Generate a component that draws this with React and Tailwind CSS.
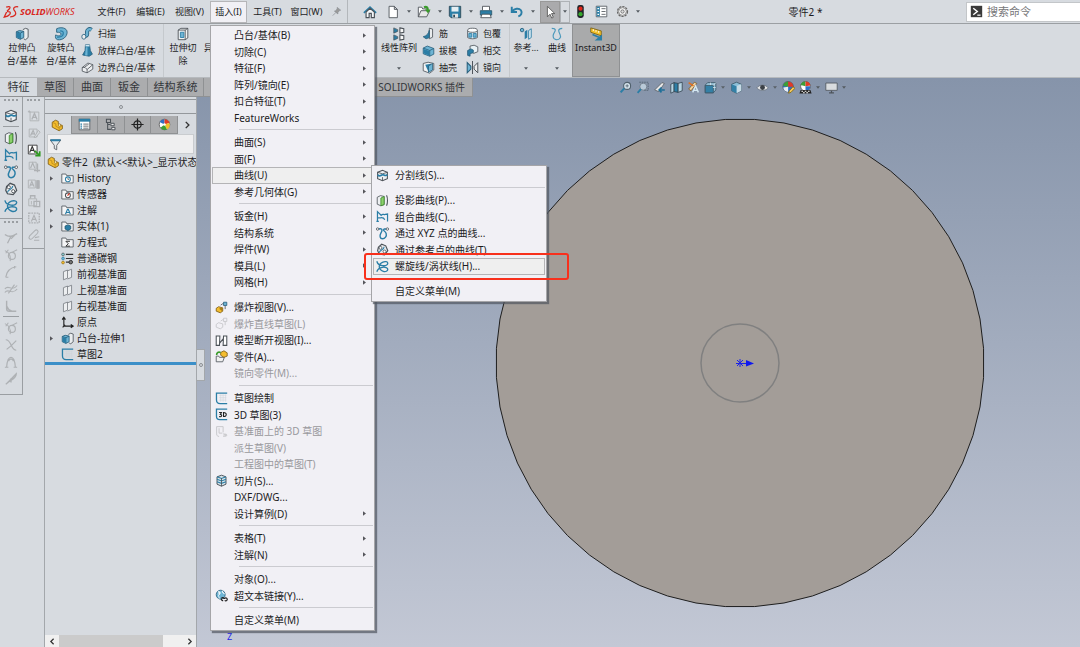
import React, { useState } from 'react'

const K = '#4b5157'
const B = '#2b7ea6'
const L = '#6db4d4'

// 16x16 drawings, looked up by name
const icons = {
    home: <><path d="M1 9L8 2.500l7 6.500" fill="none" stroke={B} strokeWidth="2" /><path d="M3.500 8v6.500H7V9.500h2.500v5H13V8L8 3.800z" fill="#f4f6f8" stroke={K} strokeWidth="1.300" /></>,
    page: <path d="M3.500 1.500h6l3.500 3.500v9.500h-9.500zM9.500 1.500V5H13" fill="#fff" stroke={K} />,
    open: <><path d="M1.500 13.500v-11h4l1 2h5v2" fill="#fff" stroke={K} /><path d="M1.500 13.500l3-7h10l-3.500 7z" fill="#e8e8e8" stroke={K} /><path d="M8 2.500c3-1 4 0 4.500 3" fill="none" stroke="#3a9c2b" strokeWidth="2.500" /><path d="M9 5h6.500l-3 4.500z" fill="#3a9c2b" /></>,
    save: <><path d="M1.500 1.500h13v13h-11l-2-2z" fill={B} stroke="#2d4856" /><path d="M4 2h8v5.500H4z" fill="#e4eef3" /><path d="M5 10h6.500v4.500H5z" fill="#dfe3e6" /><path d="M6 11h2v3H6z" fill="#2d4856" /></>,
    print: <><path d="M4 6V1.500h8V6" fill="#fff" stroke={K} /><path d="M1.500 6.500h13v5h-13z" fill={B} stroke="#2d5a70" /><path d="M3.500 10.500h9l1.500 4h-12z" fill="#fff" stroke={K} /></>,
    undo: <path d="M2 2v6h6M2.500 7.500C5 4 10 3 12.500 6c2 3 0 6-3 7" fill="none" stroke={B} strokeWidth="2.200" />,
    cursor: <path d="M5 1.500v12l3-3 2 4.500 1.800-1-2-4.200H13.500z" fill="#fff" stroke="#555" />,
    traffic: <><rect x="4" y="0" width="8" height="16" rx="3" fill="#20252a" /><circle cx="8" cy="4.500" r="2.600" fill="#e0281c" /><circle cx="8" cy="11.300" r="2.600" fill="#35a92c" /></>,
    list: <><path d="M1.500 1.500h13v13h-13z" fill="#fff" stroke={K} /><path d="M2 2h4v12H2z" fill={B} /><path d="M3 4.500h2M3 8h2M3 11.500h2" stroke="#fff" strokeWidth="1.500" /><path d="M8 4.500h5M8 8h5M8 11.500h5" stroke={K} /></>,
    props: <><path d="M1.500 1.500h13v13h-13z" fill="#fff" stroke={K} /><path d="M1 1h14v3.500H1z" fill={B} /><path d="M3 7.500h2M3 10h2M3 12.500h2" stroke={B} strokeWidth="1.500" /><path d="M6.500 7.500H13M6.500 10H13M6.500 12.500H13" stroke={K} /></>,
    gear: <><circle cx="8" cy="8" r="6" fill="#eee" stroke="#666" strokeWidth="1.800" strokeDasharray="2.700 1.200" /><circle cx="8" cy="8" r="4.800" fill="#f3f3f3" stroke="#777" /><circle cx="8" cy="8" r="2" fill="#ddd" stroke="#666" /></>,
    pin: <path d="M9 2l5 4-1.500.5-2.500 3v2L5 7.500l2-.5 2-3zM7 9.500L2.500 14" fill="#999" stroke="#8b8f93" />,
    prompt: <><path d="M1 1h14v14H1z" fill="#3a3a3a" /><path d="M4 4l5 4-5 4" fill="none" stroke="#fff" strokeWidth="1.800" /><path d="M9 12.500h4" stroke="#fff" strokeWidth="1.500" /></>,
    extrude: <><path d="M9 3l3-1.500 3 1V12l-3 2.500-2-1" fill="#e9ecee" stroke={K} /><path d="M1.500 5.500L5 4l5 1v7l-4 2-4.500-2z" fill={L} stroke="#285f7c" /><path d="M1.500 5.500L6 7l4-2M6 7v7" fill="none" stroke="#285f7c" /><path d="M2 6l4 1.500V13.500L2 11.700z" fill={B} /></>,
    revolve: <><path d="M3 2c5-2.500 12-1 12 4s-5 9.500-11 8.500c-2-.5-3-3-2-5.500 3 2 6 1 6-1S6 6 3 6z" fill={L} stroke="#285f7c" /><path d="M7 4.500c3 0 4 1 3.500 3.500S7 12 3.500 11.500" fill="none" stroke={B} strokeWidth="1.500" /></>,
    sweep: <><path d="M13 3.500c-3-2-6 0-5.500 3.500S7 11 3 11.500" fill="none" stroke="#285f7c" strokeWidth="5" /><path d="M13 3.500c-3-2-6 0-5.500 3.500S7 11 3 11.500" fill="none" stroke={L} strokeWidth="3" /><ellipse cx="3.500" cy="12" rx="2.500" ry="3" fill="#eee" stroke="#285f7c" /></>,
    loft: <><path d="M5.500 1h5l1 7 2.500 4.500-4 2.500L2 13.500 5 8z" fill={B} stroke="#285f7c" /><path d="M5.500 1h5v2h-5z" fill="#cfe6f0" /><path d="M6 4h2v10H5z" fill={L} /></>,
    boundary: <><path d="M1.500 8l7-5.500 6 2V10l-7 4.500-6-2z" fill="#eceef0" stroke={K} /><path d="M1.500 8c4-1 4 1 6 2.500l7-6M7.500 10.500v4M4 8l6-4.500" fill="none" stroke={K} /></>,
    cut: <><path d="M2.500 3.500l3-2h8v11l-3 2h-8z" fill="#f1f2f3" stroke={K} /><path d="M2.500 3.500h8v11M10.500 3.500l3-2" fill="none" stroke={K} /><path d="M5 6h4v6H5z" fill={L} stroke={B} /></>,
    pattern: <><path d="M2 1v6l4.500-2V3zM2 9v6l4.500-2v-2z" fill={B} stroke={K} strokeWidth=".8" /><path d="M9 1l4.500 1v4L9 7zM9 9l4.500 1v4L9 15z" fill="#f7f7f7" stroke={K} strokeWidth="1.200" /></>,
    rib: <><path d="M9 1.500l4 1v10l-4 2z" fill="#e9ecee" stroke={K} /><path d="M1.500 12C6 11 8 8 9 4v9l-4 1.500z" fill={B} stroke="#285f7c" /></>,
    draft: <><path d="M1.500 5l5-2.500 8 3v7l-5 2.500-8-3z" fill={L} stroke="#285f7c" /><path d="M1.500 5l8 3 5-2.500M9.500 8v7" fill="none" stroke="#285f7c" /><path d="M2 6l7 2.500V14l-7-2.500z" fill={B} /></>,
    shell: <><path d="M1.500 3l6-1.500 7 1.500v8l-5 4-8-3z" fill="#f2f3f4" stroke={K} /><path d="M4 4.500l7-1V11l-3 2.500z" fill={B} /><path d="M8 6l5-3v8l-5 3z" fill={L} stroke="#285f7c" /></>,
    wrap: <><path d="M2 4v9c2 2 10 2 12 0V4" fill="#dfeaf0" stroke={K} /><ellipse cx="8" cy="4" rx="6" ry="2.500" fill="#fff" stroke={K} /><path d="M3.500 8h3.500v4.500H3.500zM9 8h3.500v4.500H9z" fill={L} stroke={B} /></>,
    intersect: <><path d="M5 2.500l5-1 4.500 2v6l-5 2L5 9z" fill="#e8f1f5" stroke={K} /><path d="M2 14V8l4-2 3 1.500v3L5 12v3z" fill={B} stroke="#285f7c" /></>,
    mirror: <><path d="M1.500 2v12.500L6 10V6.500z" fill={L} stroke="#285f7c" strokeWidth="1.300" /><path d="M8 0v16" stroke={K} strokeWidth="1.200" /><path d="M14.500 2v12.500L10 10V6.500z" fill="#eee" stroke={K} strokeWidth="1.200" /></>,
    refgeo: <><circle cx="3.500" cy="3.500" r="2" fill={L} stroke="#285f7c" /><path d="M6.500 5l3-2v9l-3 2z" fill={B} /><path d="M11 4l3-2v10l-3 2z" fill="#dcebf2" stroke={B} /></>,
    curve: <path d="M2 1.500c6 0 4 3 2.500 5.500S3 14 7 14.500s6-3 4.500-6S8 2 14 1.500" fill="none" stroke="#4a98bb" strokeWidth="1.300" />,
    instant: <><path d="M2 1L14 4.500V10L2 6z" fill="#f4c22c" stroke="#7d6414" /><path d="M5 2.500v2M8 3.500v2M11 4.500v2" stroke="#fff" /><path d="M4 8.500l8 3.500M14 10.500v4H9z" fill={B} stroke={B} strokeWidth="1.800" /></>,
    split: <><path d="M2 4l6-2.500L14 4v8l-6 2.500L2 12z" fill="#eef0f2" stroke={K} strokeWidth="1.300" /><path d="M2 4l6 2 6-2M8 10v4" fill="none" stroke={K} /><path d="M2 7c3 4 5-1 7 0s3 2 5 0" fill="none" stroke={B} strokeWidth="2" /></>,
    project: <><path d="M1.500 4l4-2 4.500 1v10l-4 1.500-4.500-2z" fill="#eef0f2" stroke={K} /><path d="M6 5l4-2v10l-4 1.500z" fill="#8bd06b" stroke="#3c8b2a" /><path d="M13 1.500c1.500 3 1.500 10 0 13" fill="none" stroke={K} strokeWidth="1.300" /></>,
    composite: <path d="M.5 14h3M1.800 14V2l4.500 4.500c2-2.500 3-.5 5-1L14.200 5v9M1.800 9.500c4 1 7-2 9 2.500" fill="none" stroke={B} strokeWidth="1.500" />,
    xyz: <><path d="M3 2.500c6-1.500 4.500 2.500 3 5-2 3.500-1 7 2 7s5.500-3 4.500-6.500-5-3.500-2.500-5.500h3" fill="none" stroke={B} strokeWidth="1.700" /><circle cx="2" cy="2.500" r="1.500" fill="#fff" stroke={K} /><circle cx="14" cy="2.500" r="1.500" fill="#fff" stroke={K} /></>,
    refpts: <><path d="M3 5l4-3.500 5 2 2.500 6-4 5-6.500-1-2-4z" fill="#e7e9eb" stroke={K} strokeWidth="1.400" /><circle cx="5.500" cy="6" r="1.800" fill="#fff" stroke={K} /><circle cx="10.500" cy="10.500" r="1.800" fill="#fff" stroke={K} /><path d="M4 12c0-4 6-3 6-7.500" fill="none" stroke={B} strokeWidth="1.300" /></>,
    helix: <path d="M1 1.500c1 4 3 5 7 5.500s6.500-1 6.500-3S11 1.500 8.500 2.500 4 6 4 8s2 5 5 6 5.500-.5 5.500-2.500-3-3-6.500-2.500-6 2-7 5.500" fill="none" stroke={B} strokeWidth="1.600" />,
    anno: <><path d="M3.500 3.500h10v10h-10z" fill="none" stroke="currentColor" /><path d="M5.500 12l3-7 3 7M6.500 9.500h4" fill="none" stroke="currentColor" strokeWidth="1.500" /><path d="M1 3h3M2.500 1.500v3" stroke="currentColor" /></>,
    annoGo: <><path d="M1.500 2.500h10v10h-10z" fill="#fff" stroke="#333" /><path d="M3 11l3-7 3 7M4 8.500h4" fill="none" stroke="#333" strokeWidth="1.300" /><path d="M9 9l5 5M14.500 9.500v5h-5" fill="none" stroke="#2f9a20" strokeWidth="2" /></>,
    annoEdit: <><path d="M2.500 3.500h9v9h-9z" fill="none" stroke="currentColor" /><path d="M4 11l3-6 2 5M5 9h3" fill="none" stroke="currentColor" strokeWidth="1.300" /><path d="M8 13l5-8 2 2-5 6z" fill="#d7dbe0" stroke="currentColor" /></>,
    annoMove: <><path d="M2.500 2.500h8v8h-8z" fill="none" stroke="currentColor" /><path d="M4 9.500l2.500-6 2.500 6" fill="none" stroke="currentColor" strokeWidth="1.300" /><path d="M12 4v10M8 12h7" stroke="currentColor" strokeWidth="1.500" /></>,
    annoLock: <><path d="M1.500 3.500h8v9h-8z" fill="none" stroke="currentColor" /><path d="M3 11l2.500-6L8 11M4 9h3" fill="none" stroke="currentColor" strokeWidth="1.300" /><path d="M11 4h3v9h-3z" fill="currentColor" stroke="currentColor" /></>,
    lock: <><path d="M2 5.500h9v8H2z" fill="none" stroke="currentColor" /><path d="M4 5V2h5v3M8 8.500h6.500v6H8z" fill="none" stroke="currentColor" strokeWidth="1.500" /><path d="M5 8v4" stroke="currentColor" /></>,
    annoArea: <><path d="M2 2.500h12v11H2z" fill="none" stroke="currentColor" strokeWidth="1.500" strokeDasharray="2 1" /><path d="M5 12l3-7 3 7M6 9.500h4" fill="none" stroke="currentColor" strokeWidth="1.300" /></>,
    clip: <path d="M3 9l6-6c2-2 5 0 3 3l-6 6c-2 2-5 0-3-3l5-5M9 11l5-1M8 14h6" fill="none" stroke="currentColor" strokeWidth="1.200" />,
    s1: <path d="M1 4c4 3 7 3 14-1M8 6L4 14M6 6h5l-3 3" fill="none" stroke="currentColor" strokeWidth="1.500" />,
    s2: <><circle cx="9" cy="9" r="4" fill="none" stroke="currentColor" strokeWidth="1.300" /><path d="M1 3c5 2 7 6 6 12M2 6l3-4M9 5l6-3" fill="none" stroke="currentColor" strokeWidth="1.200" /></>,
    s3: <path d="M2 14C3 7 7 3 14 2M2 14h3M12 1v3" fill="none" stroke="currentColor" strokeWidth="1.300" />,
    s4: <path d="M1 8c4-6 8 4 14-4M1 12c4-6 8 4 14-4M5 13l7-10" fill="none" stroke="currentColor" strokeWidth="1.300" />,
    s5: <path d="M3 2v9c0 2 1 3 3 3h8M3 8c1 3 3 5 6 6" fill="none" stroke="currentColor" strokeWidth="1.600" />,
    s6: <path d="M2 2c4 0 5 4 6 6s3 6 6 6M14 3L8 9M3 13l5-4" fill="none" stroke="currentColor" strokeWidth="1.400" />,
    s7: <path d="M3 14C4-1 12-1 13 14M5.500 7c0-3 5-3 5 0M1 14h4M11 14h4" fill="none" stroke="currentColor" strokeWidth="1.300" />,
    s8: <path d="M2 14C5 12 8 8 14 2c0 5-4 6-8 9M8 7v5" fill="none" stroke="currentColor" strokeWidth="1.500" />,
    part: <><path d="M1.500 4l4-2.500L9 3v3l5 2v4l-4 2.500L1.500 10z" fill="#f4bd2e" stroke="#7b5a12" /><path d="M1.500 4L6 6v3l4 2 4-3M10 11v3" fill="none" stroke="#b8891c" /><circle cx="10.500" cy="7.500" r="1.500" fill="#fff3c4" stroke="#7b5a12" strokeWidth=".7" /></>,
    config: <><path d="M3 1.500h5v4H3zM4.500 5.500v8.500h4M4.500 8h3" fill="none" stroke={K} strokeWidth="1.300" /><path d="M8.500 6.500h4v3h-4zM9.500 11.500h4v3h-4z" fill="#eee" stroke={K} strokeWidth="1.200" /></>,
    target: <><circle cx="8" cy="8" r="4.500" fill="none" stroke="#222" strokeWidth="1.500" /><path d="M8 .5v15M.5 8h15" stroke="#222" strokeWidth="1.500" /></>,
    ball: <><circle cx="8" cy="8" r="6.500" fill="#fff" stroke="#555" /><path d="M8 8L2 5a6.500 6.500 0 016-3.500z" fill="#2f6fc4" /><path d="M8 8V1.500A6.500 6.500 0 0114 6z" fill="#e03b26" /><path d="M8 8l6-2a6.500 6.500 0 01-3 8z" fill="#f1c22b" /><path d="M8 8l3 6a6.500 6.500 0 01-8-2z" fill="#3d9e36" /><circle cx="8" cy="8" r="1.500" fill="#fff" /></>,
    ballEdit: <><circle cx="7.500" cy="7" r="6.500" fill="#2f6fc4" stroke="#555" strokeWidth=".8" /><path d="M7.500 7L1.500 6a6.500 6.500 0 016-5.500z" fill="#3d9e36" /><path d="M7.500 7V.5A6.500 6.500 0 0114 7z" fill="#e03b26" /><path d="M1.500 8l6-1v6.500A6.500 6.500 0 011.500 8z" fill="#e8edf2" /><path d="M8 15l1-3 4.500-5L16 9l-5 5z" fill="#f4c95c" stroke="#7d6414" /></>,
    ballScene: <><circle cx="8" cy="6.500" r="6" fill="#fff" stroke="#555" /><path d="M8 6.500L2 5a6 6 0 016-4.500z" fill="#3d9e36" /><path d="M8 6.500V.5a6 6 0 016 5z" fill="#e03b26" /><path d="M8 6.500h6a6 6 0 01-6 6z" fill="#2f6fc4" /><path d="M2 11h12l1.500 4.500H.5z" fill="#222" /><path d="M3 12.500h2M7 12.500h2M11 12.500h2M5 14.500h2M9 14.500h2" stroke="#fff" strokeWidth="1.300" /></>,
    funnel: <><path d="M1.500 2.500h13L9.500 9v5.500l-3-1.500V9z" fill="#e6eaed" stroke={K} /><path d="M1.500 1.500h13l-1 2.500h-11z" fill={B} /></>,
    fHistory: <><path d="M1 13.500v-11h5l1 2h8v9z" fill="#f4f5f6" stroke={K} /><circle cx="8.500" cy="9" r="3" fill="#fff" stroke={B} strokeWidth="1.300" /><path d="M8.500 7.500V9H10" fill="none" stroke={K} /></>,
    fSensor: <><path d="M1 13.500v-11h5l1 2h8v9z" fill="#f4f5f6" stroke={K} /><circle cx="8.500" cy="9" r="3" fill="#fff" stroke={K} strokeWidth="1.300" /><path d="M8 9.500l2.500-3" stroke="#d93a26" strokeWidth="1.500" /></>,
    fAnno: <><path d="M1 13.500v-11h5l1 2h8v9z" fill="#f4f5f6" stroke={K} /><path d="M5.500 12.500l2.500-6h1l2.500 6M6.500 10.500h4" fill="none" stroke={B} strokeWidth="1.400" /></>,
    fBody: <><path d="M1 13.500v-11h5l1 2h8v9z" fill="#f4f5f6" stroke={K} /><path d="M5 7.500l3.500-1.500L12 7.500V11l-3.500 2L5 11z" fill={B} stroke="#1f566f" /></>,
    fEq: <><path d="M1 13.500v-11h5l1 2h8v9z" fill="#f4f5f6" stroke={K} /><path d="M11 6.500H6l3 3-3 3h5" fill="none" stroke="#333" strokeWidth="1.200" /></>,
    material: <><path d="M6 3h9M6 8h9M6 12.500h4" stroke="#333" strokeWidth="1.400" /><circle cx="2.500" cy="3" r="1.700" fill="#8cc" stroke={K} strokeWidth=".8" /><circle cx="2.500" cy="8" r="1.700" fill={L} stroke={B} strokeWidth=".8" /><circle cx="2.500" cy="13" r="1.700" fill="#f4bd2e" stroke="#8d6a12" strokeWidth=".8" /><circle cx="12" cy="12.500" r="2.200" fill="#777" stroke="#222" /></>,
    plane: <path d="M3 4.500l5-2v10l-5 2zM8 3.500l5-2v10l-5 2" fill="#eceef0" stroke="#777d83" />,
    origin: <path d="M3.500 2v10.500H14M1.500 4.500l2-3 2 3M12 10.500l3 2-3 2M2 14l3-3" fill="none" stroke="#222" strokeWidth="1.400" />,
    sketch: <><path d="M5 4h9M5 7h9M5 10h9M7 3v9M10 3v9M13 3v9" stroke="#cfd4d9" strokeWidth=".7" /><path d="M15 1.500H1.800V9.500c0 3 1.500 4.700 4.500 4.700H15" fill="none" stroke={B} strokeWidth="1.600" /></>,
    explode: <><path d="M1.500 9l3-2 5 1.500v4l-3 2-5-2z" fill="#f4bd2e" stroke="#7b5a12" /><path d="M5 9.500l4-2v5z" fill="#a77b14" /><path d="M10.500 1.500h4v4h-4z" fill={L} stroke="#285f7c" /><path d="M7 5l3-2M12.500 6v4" stroke={K} /></>,
    explodeOff: <><path d="M1.500 9l3-2 5 1.500v4l-3 2-5-2z" fill="none" stroke="#c4c4c8" /><path d="M10.500 1.500h4v4h-4zM7 5l3-2M12.500 6v4" fill="none" stroke="#c4c4c8" /></>,
    breakView: <path d="M1.500 2.500H6L5.500 14h-4zM10.500 2.500h4V14H10zM6 11l4-5" fill="#fff" stroke={K} strokeWidth="1.300" />,
    insertPart: <><path d="M1.500 14.500v-7h3l1 1.500h6l-2 5.500z" fill="#f1f1f1" stroke={K} /><path d="M7 3l4-2 4 2.500v4L11 9 7 6.500z" fill="#f4bd2e" stroke="#7b5a12" /><path d="M2 6c0-3 2-4 5-3" fill="none" stroke="#3a9c2b" strokeWidth="2" /></>,
    sketch3d: <><path d="M15 1.500H1.800V10c0 2.500 1.500 4.200 4 4.200H15" fill="none" stroke={B} strokeWidth="1.600" /><path d="M5 5.500h3L6.500 8c3 0 2 3.500-1.500 2.500M10.500 5.500v5c4.500 0 4.500-5 0-5z" fill="none" stroke="#222" strokeWidth="1.300" /></>,
    sketchOff: <path d="M2 2v9c0 2 1 3 3 3M2 2h8v7M5 4v6h4M10 11h2l-1 1.500 1 1.500h-2M13 11v3c2 0 2-3 0-3z" fill="none" stroke="#c8c8cc" strokeWidth="1.200" />,
    slice: <><path d="M2.500 3.500L8 1.500l5.500 2v9L8 15l-5.500-2.500z" fill="#d9e6ec" stroke={K} strokeWidth="1.200" /><path d="M2.500 6.500l5.500 2 5.500-2M2.500 9.500l5.500 2 5.500-2M2.500 3.500l5.500 2 5.500-2" fill="none" stroke={B} strokeWidth="1.300" /><path d="M8 5v10" stroke={K} /></>,
    link: <><circle cx="7" cy="7" r="5.500" fill={L} stroke="#285f7c" /><path d="M4 3c3 0 3 3 1 4s1 3 0 5M9 2c0 3 1 3 3 4" fill="#e8f2f6" stroke="#fff" /><path d="M8 11.500a1.800 1.800 0 013 0h1a1.800 1.800 0 110 2.500M8 12a1.500 1.500 0 002 2" fill="none" stroke="#222" strokeWidth="1.500" /></>,
    zoomFit: <><circle cx="10" cy="6" r="4.300" fill="#d5e3ec" stroke="#50606c" strokeWidth="1.300" /><path d="M6.500 9L2 14" stroke={B} strokeWidth="2.500" /><path d="M8 6h4M10 4v4" stroke="#50606c" /></>,
    zoomArea: <><path d="M4 1.500h11v10H9" fill="none" stroke="#50606c" strokeDasharray="2 1" /><circle cx="9" cy="7" r="4.300" fill="#b9cad8" stroke="#6c7985" /><path d="M6 10l-4 4.500" stroke={B} strokeWidth="2.300" /></>,
    prevView: <><path d="M2 11l9-9 3 1-7 10z" fill="#e6e6e6" stroke="#5b6066" /><path d="M14.500 11H8M10.500 8L7.500 11l3 3" fill="none" stroke="#1f6f98" strokeWidth="2" /></>,
    section: <><path d="M1 4l4-2v11l-4 2z" fill="#b8d5e3" stroke="#34444f" /><path d="M5 2l5 1v11l-5-1z" fill={B} stroke="#34444f" /><path d="M10 3l5-1.500V12l-5 2z" fill="#b8d5e3" stroke="#34444f" /></>,
    drawType: <><path d="M2 10L9 1.500 12 3 5 12z" fill="#f1d3a0" stroke="#7a5a2c" /><path d="M7 14l3.500-8 3.500 8M8 11.500h5" fill="none" stroke="#d4e8f2" strokeWidth="1.700" /><path d="M2 2l6 4" stroke="#e0701f" strokeWidth="2" /></>,
    orient: <><path d="M1.500 5l3-3h10v9l-3 3.500h-10z" fill="#9cc7dc" stroke="#34505f" /><path d="M1.500 5.500h10v9h-10z" fill={B} stroke="#34505f" /><path d="M8 2v3M11.500 5.500l3-3.500M11 8h3.500" stroke="#e4eef3" /></>,
    display: <><path d="M2 4l6-2.500L14 4v8l-6 3-6-3z" fill="#8dc3dc" stroke="#34505f" /><path d="M8 6l6-2v8l-6 3z" fill="#cfe3ed" /><path d="M2 4l6 2.500V15l-6-3z" fill={B} /></>,
    eye: <><path d="M1 8.500C4 4 12 4 15 8.500c-3 4-11 4-14 0z" fill="#eee" stroke="#68717a" /><circle cx="8" cy="8" r="3" fill="#33383d" /></>,
    monitor: <><path d="M1 2.500h14v9H1z" fill="#d9dcdf" stroke="#4d545b" /><path d="M8 12v2.500M5 14.500h6" stroke="#4d545b" strokeWidth="1.500" /></>,
    arrowL: <path d="M10 3L5 8l5 5" fill="none" stroke="#333" strokeWidth="2.200" />,
    arrowR: <path d="M6 3l5 5-5 5" fill="none" stroke="#333" strokeWidth="2.200" />,
}

const Icon = ({ name, className = 'size-3' }) => (
    <svg viewBox="0 0 16 16" className={`shrink-0 ${className}`} aria-hidden="true">{icons[name]}</svg>
)

const Caret = () => (
    <svg viewBox="0 0 6 4" className="w-1 h-[3px] shrink-0" aria-hidden="true"><path d="M0 0h6L3 4z" fill="#555b61" /></svg>
)

const Chevron = () => (
    <svg viewBox="0 0 4 6" className="w-[3px] h-[5px] shrink-0" aria-hidden="true"><path d="M0 0l4 3-4 3z" fill="#55555a" /></svg>
)

// sub: has a submenu, off: greyed out
const insertMenu = [
    [
        { label: '凸台/基体(B)', sub: true },
        { label: '切除(C)', sub: true },
        { label: '特征(F)', sub: true },
        { label: '阵列/镜向(E)', sub: true },
        { label: '扣合特征(T)', sub: true },
        { label: 'FeatureWorks', sub: true },
    ],
    [
        { label: '曲面(S)', sub: true },
        { label: '面(F)', sub: true },
        { label: '曲线(U)', sub: true, open: true },
        { label: '参考几何体(G)', sub: true },
    ],
    [
        { label: '钣金(H)', sub: true },
        { label: '结构系统', sub: true },
        { label: '焊件(W)', sub: true },
        { label: '模具(L)', sub: true },
        { label: '网格(H)', sub: true },
    ],
    [
        { label: '爆炸视图(V)...', icon: 'explode' },
        { label: '爆炸直线草图(L)', icon: 'explodeOff', off: true },
        { label: '模型断开视图(I)...', icon: 'breakView' },
        { label: '零件(A)...', icon: 'insertPart' },
        { label: '镜向零件(M)...', off: true },
    ],
    [
        { label: '草图绘制', icon: 'sketch' },
        { label: '3D 草图(3)', icon: 'sketch3d' },
        { label: '基准面上的 3D 草图', icon: 'sketchOff', off: true },
        { label: '派生草图(V)', off: true },
        { label: '工程图中的草图(T)', off: true },
        { label: '切片(S)...', icon: 'slice' },
        { label: 'DXF/DWG...' },
        { label: '设计算例(D)', sub: true },
    ],
    [
        { label: '表格(T)', sub: true },
        { label: '注解(N)', sub: true },
    ],
    [
        { label: '对象(O)...' },
        { label: '超文本链接(Y)...', icon: 'link' },
    ],
    [{ label: '自定义菜单(M)' }],
]

const curveMenu = [
    [{ label: '分割线(S)...', icon: 'split' }],
    [
        { label: '投影曲线(P)...', icon: 'project' },
        { label: '组合曲线(C)...', icon: 'composite' },
        { label: '通过 XYZ 点的曲线...', icon: 'xyz' },
        { label: '通过参考点的曲线(T)', icon: 'refpts' },
        { label: '螺旋线/涡状线(H)...', icon: 'helix', marked: true },
    ],
    [{ label: '自定义菜单(M)' }],
]

const tree = [
    { label: 'History', icon: 'fHistory', sub: true },
    { label: '传感器', icon: 'fSensor' },
    { label: '注解', icon: 'fAnno', sub: true },
    { label: '实体(1)', icon: 'fBody', sub: true },
    { label: '方程式', icon: 'fEq' },
    { label: '普通碳钢', icon: 'material' },
    { label: '前视基准面', icon: 'plane' },
    { label: '上视基准面', icon: 'plane' },
    { label: '右视基准面', icon: 'plane' },
    { label: '原点', icon: 'origin' },
    { label: '凸台-拉伸1', icon: 'extrude', sub: true },
    { label: '草图2', icon: 'sketch' },
]

const MenuPanel = ({ groups, className }) => (
    <div role="menu" className={`absolute z-20 border border-[#a5a5a8] bg-[#f1f0f5] py-px text-left text-[10px] leading-4 text-[#1c1c1e] shadow-[2px_2px_1px_rgba(80,85,95,0.7)] ${className}`}>
        {groups.map((group, i) => (
            <React.Fragment key={i}>
                {i > 0 && <div className="flex h-2 items-center pl-7 pr-px"><hr className="w-full border-[#cbcbd0]" /></div>}
                <div>
                    {group.map((item) => (
                        <div key={item.label} className="relative odd:h-[17px] even:h-4 mx-px">
                            <button
                                role="menuitem"
                                disabled={item.off}
                                className={`flex h-full w-full items-center border whitespace-nowrap pl-[2px] pr-[6px] disabled:text-[#99999d] ${item.open || item.marked ? 'border-[#b4b4b6] bg-[#efefef]' : 'border-transparent'}`}
                            >
                                <span className="mr-[7px] flex w-3 shrink-0">{item.icon && <Icon name={item.icon} className="size-[13px]" />}</span>
                                <span className="grow text-left">{item.label}</span>
                                {item.sub && <Chevron />}
                            </button>
                            {item.open && <MenuPanel groups={curveMenu} className="-top-[2px] left-full -ml-[2px] w-44" />}
                            {/* red highlight frame around the helix entry */}
                            {item.marked && <div className="pointer-events-none absolute -top-[5px] -bottom-[5px] -left-[9px] -right-6 rounded-[3px] border-2 border-[#f8301c]" />}
                        </div>
                    ))}
                </div>
            </React.Fragment>
        ))}
    </div>
)

const TopBar = () => {
    const [menuOpen, setMenuOpen] = useState(true)

    return (
        <header className="flex h-6 shrink-0 items-center border-b border-[#9b9fa3]">
            <div className="flex w-[92px] items-center pl-[3px] text-[#d9281f]">
                <svg viewBox="0 0 20 16" className="mr-px h-[14px] w-4" aria-hidden="true">
                    <path d="M4 2c4-1.500 6-.5 4 2L5 7M5 7.500c4-.5 5 1 3.500 3.500-1.500 2-4 3-7 3.500L4.500 8M19 1.500c-4-.5-6.500 1-5.500 3.500l2 3c1.500 3-1 6-6.500 6" fill="none" stroke="currentColor" strokeWidth="1.600" />
                </svg>
                <span className="text-[9px] leading-3 italic"><b>SOLID</b>WORKS</span>
            </div>
            <nav className="flex items-center text-[9px] leading-4 text-[#1c1c1e]">
                {['文件(F)', '编辑(E)', '视图(V)', '插入(I)', '工具(T)', '窗口(W)'].map((m) => (
                    <div key={m} className="relative mx-px">
                        <button
                            onClick={() => m === '插入(I)' && setMenuOpen(!menuOpen)}
                            className={`h-[22px] w-[37px] border whitespace-nowrap ${m === '插入(I)' && menuOpen ? 'border-[#b5b5b8] bg-[#f1f0f5]' : 'border-transparent'}`}
                        >
                            {m}
                        </button>
                        {m === '插入(I)' && menuOpen && <MenuPanel groups={insertMenu} className="left-0 top-6 w-[165px]" />}
                    </div>
                ))}
            </nav>
            <div className="flex h-full w-[22px] items-center justify-center border-r border-[#b3b7bb]"><Icon name="pin" className="size-[11px]" /></div>
            <div className="flex items-center pl-[14px]">
                <button aria-label="主页" className="mr-[7px] flex w-4 justify-center"><Icon name="home" className="size-[14px]" /></button>
                {['page', 'open', 'save', 'print', 'undo'].map((n) => (
                    <React.Fragment key={n}>
                        <button aria-label={n} className="flex w-4 justify-center"><Icon name={n} className="size-[14px]" /></button>
                        <button aria-label={`${n} 选项`} className="flex w-[15px] justify-center"><Caret /></button>
                    </React.Fragment>
                ))}
                <button aria-label="选择" className="flex h-[22px] w-5 items-center justify-center border border-[#999] bg-[#aaaaac]"><Icon name="cursor" className="size-[14px]" /></button>
                <button aria-label="选择选项" className="mr-[2px] flex h-[22px] w-[10px] items-center justify-center border border-[#aeb2b6]"><Caret /></button>
                <div className="flex gap-[5px]">
                    {['traffic', 'list', 'gear'].map((n) => (
                        <button key={n} aria-label={n} className="flex w-4 justify-center"><Icon name={n} className="size-[13px]" /></button>
                    ))}
                </div>
                <button aria-label="设置选项" className="flex w-[15px] justify-center"><Caret /></button>
            </div>
            <h1 className="grow text-center text-[10px] leading-4 text-[#1c1c1e]">零件2 *</h1>
            <label className="flex h-5 w-[114px] shrink-0 items-center border border-r-0 border-[#c3c6c9] bg-white pl-[3px]">
                <Icon name="prompt" className="mr-1 size-[13px]" />
                <input aria-label="搜索命令" placeholder="搜索命令" className="w-full min-w-0 text-[11px] leading-4 outline-none placeholder:text-[#77777a]" />
            </label>
        </header>
    )
}

const BigTool = ({ icon, lines, caret, className }) => (
    <button className={`flex h-full shrink-0 flex-col items-center leading-[13px] ${className}`}>
        <Icon name={icon} className="size-[14px]" />
        {lines.map((l) => <span key={l} className="whitespace-nowrap">{l}</span>)}
        {caret && <span className="mt-[13px]"><Caret /></span>}
    </button>
)

const SmallTools = ({ items, className }) => (
    <div className={`flex shrink-0 flex-col pt-px ${className}`}>
        {items.map(([icon, label]) => (
            <button key={label} className="flex h-[17px] items-center gap-1 whitespace-nowrap"><Icon name={icon} className="size-[13px]" />{label}</button>
        ))}
    </div>
)

const Ribbon = () => (
    <div className="flex h-[54px] shrink-0 border-b border-[#b6babe] pl-[2px] text-[9px] text-[#1c1c1e]">
        <BigTool icon="extrude" lines={['拉伸凸', '台/基体']} className="w-10 pt-[3px]" />
        <BigTool icon="revolve" lines={['旋转凸', '台/基体']} className="w-[38px] pt-[3px]" />
        <SmallTools items={[['sweep', '扫描'], ['loft', '放样凸台/基体'], ['boundary', '边界凸台/基体']]} className="w-[84px] border-r border-[#c5c9cd] pl-px" />
        <BigTool icon="cut" lines={['拉伸切', '除']} className="w-[38px] pt-[3px]" />
        <button className="flex w-[174px] shrink-0 pl-[2px] pt-[17px] leading-[13px]">异</button>
        <BigTool icon="pattern" lines={['线性阵列']} caret className="w-[46px] pt-[3px]" />
        <SmallTools items={[['rib', '筋'], ['draft', '拔模'], ['shell', '抽壳']]} className="w-11" />
        <SmallTools items={[['wrap', '包覆'], ['intersect', '相交'], ['mirror', '镜向']]} className="w-11 border-r border-[#c5c9cd]" />
        <BigTool icon="refgeo" lines={['参考...']} caret className="w-8 pt-[3px]" />
        <BigTool icon="curve" lines={['曲线']} caret className="w-[30px] pt-[3px]" />
        <BigTool icon="instant" lines={['Instant3D']} className="w-12 border border-[#8f9193] bg-[#a9aaab] pt-[2px]" />
    </div>
)

const tabClass = 'h-full border-r border-[#8f9193]'

const TabRow = () => (
    <div className="flex h-[19px] shrink-0 text-[11px] leading-[18px] text-[#33363a]">
        <div className="flex border-b border-[#8f9193] bg-[#abacae]">
            <button className="h-full w-[37px] bg-[#d7dbe0]">特征</button>
            <button className={`${tabClass} w-[37px]`}>草图</button>
            <button className={`${tabClass} w-[37px]`}>曲面</button>
            <button className={`${tabClass} w-[37px]`}>钣金</button>
            <button className={`${tabClass} w-14`}>结构系统</button>
            <button className={`${tabClass} w-[269px] pr-[7px] text-right text-[10px]`}>SOLIDWORKS 插件</button>
        </div>
        <div className="flex items-center pl-[146px]">
            {['zoomFit', 'zoomArea', 'prevView', 'section', 'drawType'].map((n) => (
                <button key={n} aria-label={n} className="mr-1"><Icon name={n} className="size-[13px]" /></button>
            ))}
            {['orient', 'display', 'eye'].map((n) => (
                <button key={n} aria-label={n} className="mr-[5px] flex items-center gap-1 opacity-90"><Icon name={n} className="size-[13px]" /><Caret /></button>
            ))}
            <button aria-label="ball" className="mr-1"><Icon name="ballEdit" className="size-[13px]" /></button>
            {['ballScene', 'monitor'].map((n) => (
                <button key={n} aria-label={n} className="mr-[5px] flex items-center gap-1"><Icon name={n} className="size-[13px]" /><Caret /></button>
            ))}
        </div>
    </div>
)

const Grip = () => <div className="mx-1 mt-[2px] mb-[6px] border-t-2 border-dotted border-[#9a9ea2]" />

const ToolStrip = ({ names, className = '' }) => (
    <div className={`flex flex-col items-center ${className}`}>
        {names.map((n, i) => n === '-'
            ? <hr key={i} className="my-[2px] w-4 border-[#9a9ea2]" />
            : <button key={i} aria-label={`${n} ${i}`} className="flex h-[17px] items-center"><Icon name={n} className="size-[14px]" /></button>)}
    </div>
)

const FeaturePanel = () => (
    <aside className="flex w-[153px] shrink-0 flex-col border-x border-[#a3a7ab] bg-[#d7dbe0] text-[#1c1c1e]">
        <div className="mt-[2px] flex h-[15px] items-center justify-center border-y border-[#94989c]">
            <span className="size-1 rounded-full border border-[#8a8e92]" />
        </div>
        <div className="mt-[2px] flex h-[18px] shrink-0">
            {['part', 'props', 'config', 'target', 'ball'].map((n, i) => (
                <button key={n} aria-label={`tab ${n}`} className={`flex flex-1 items-center justify-center border-r border-[#8f9193] ${i === 0 ? '' : 'border-b bg-[#abacae]'}`}><Icon name={n} className="size-[13px]" /></button>
            ))}
            <button aria-label="更多" className="flex w-[18px] items-center justify-center"><Icon name="arrowR" className="size-[10px]" /></button>
        </div>
        <label className="mx-[2px] flex h-5 shrink-0 items-center border border-[#c9cccf] bg-[#efeff0] pl-px">
            <Icon name="funnel" className="size-[13px]" />
            <input aria-label="过滤" className="min-w-0 grow outline-none" />
        </label>
        <div className="flex h-4 shrink-0 items-center gap-[2px] overflow-hidden pl-[2px] text-[10px] leading-4 whitespace-pre">
            <Icon name="part" className="size-[13px]" />零件2  (默认&lt;&lt;默认&gt;_显示状态
        </div>
        <ul className="border-b-[3px] border-[#3b8fc8] text-[10px] leading-4">
            {tree.map((t) => (
                <li key={t.label} className="flex h-4 items-center">
                    <span className="ml-[5px] w-[11px]">{t.sub && <Chevron />}</span>
                    <Icon name={t.icon} className="mr-[3px] size-[13px]" />
                    {t.label}
                </li>
            ))}
        </ul>
        <div className="mt-auto flex h-3 shrink-0 items-center bg-[#f0f0f0]">
            <button aria-label="向左滚动" className="flex w-[14px] justify-center"><Icon name="arrowL" className="size-[9px]" /></button>
            <div className="h-full w-[104px] bg-[#cbcbcb]" />
            <button aria-label="向右滚动" className="ml-auto flex w-[14px] justify-center"><Icon name="arrowR" className="size-[9px]" /></button>
        </div>
    </aside>
)

// the display mesh draws a circle as straight facets
const facets = Array.from({ length: 52 }, (_, i) => {
    const a = ((i + 0.5) / 52) * Math.PI * 2
    return `${245 + 244 * Math.cos(a)},${245 + 244 * Math.sin(a)}`
}).join(' ')

const Viewport = () => (
    <main className="relative flex grow items-start justify-end pr-[95px] pt-[21px]">
        <div className="absolute left-0 top-[252px] flex h-8 w-2 items-center justify-center border border-l-0 border-[#a3a7ab] bg-[#d7dbe0]">
            <span className="size-1 rounded-full border border-[#8a8e92]" />
        </div>
        <svg viewBox="0 0 490 490" className="size-[490px] shrink-0" aria-hidden="true">
            <polygon points={facets} fill="#a39d98" stroke="#1e1e1e" />
            <circle cx="245" cy="245" r="39" fill="none" stroke="#808080" strokeWidth="1.500" />
            <path d="M242 242l6 6M248 242l-6 6M245 241v8M241 245.500h14" stroke="#1a22e8" />
            <path d="M251 242l8 3.500-8 3z" fill="#0f18f0" />
        </svg>
        <span className="absolute bottom-1 left-[30px] text-[9px] leading-3 text-[#1f26e8]">Z</span>
    </main>
)

const App = () => {
    return (
        <div className="flex h-screen flex-col overflow-hidden bg-[#d7dbe0] font-['Noto_Sans','Noto_Sans_CJK_SC',sans-serif]">
            <TopBar />
            <Ribbon />
            <div className="flex min-h-0 grow flex-col bg-linear-to-b from-[#8694aa] to-[#c3c8d5]">
                <TabRow />
                <div className="flex min-h-0 grow">
                    <div className="flex shrink-0 items-start bg-[#d7dbe0] text-[#aeb1b4]">
                        <div className="w-[23px] border-r border-b border-[#9a9ea2]">
                            <Grip />
                            <ToolStrip names={['split', '-', 'project', 'composite', 'xyz', 'refpts', 'helix']} className="border-b border-[#9a9ea2] pb-1" />
                            <Grip />
                            <ToolStrip names={['s1', 's2', 's3', 's4', 's5', '-', 's2', 's6', 's7', 's8']} className="pb-[7px]" />
                        </div>
                        <div className="w-[21px] border-b border-[#9a9ea2]">
                            <Grip />
                            <ToolStrip names={['anno', 'annoEdit', 'annoGo', 'annoMove', 'annoLock', 'lock', 'annoArea', 'clip']} className="pb-[5px]" />
                        </div>
                    </div>
                    <FeaturePanel />
                    <Viewport />
                </div>
            </div>
        </div>
    )
}

export default App
